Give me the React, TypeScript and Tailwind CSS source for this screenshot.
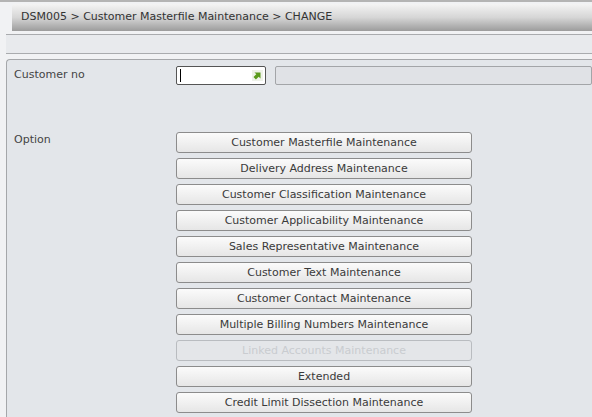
import React from 'react';

const options = [
  { label: 'Customer Masterfile Maintenance' },
  { label: 'Delivery Address Maintenance' },
  { label: 'Customer Classification Maintenance' },
  { label: 'Customer Applicability Maintenance' },
  { label: 'Sales Representative Maintenance' },
  { label: 'Customer Text Maintenance' },
  { label: 'Customer Contact Maintenance' },
  { label: 'Multiple Billing Numbers Maintenance' },
  { label: 'Linked Accounts Maintenance', disabled: true },
  { label: 'Extended' },
  { label: 'Credit Limit Dissection Maintenance' },
];

const App: React.FC = () => {
  return (
    <div
      className="h-[417px] w-[592px] overflow-hidden bg-[#f1f2f4] text-[11px] text-[#444]"
      style={{ fontFamily: '"DejaVu Sans", Verdana, sans-serif' }}
    >
      <div className="h-[2px] bg-[#b4b4b4]" />
      {/* breadcrumb bar */}
      <div className="mt-[2px] ml-[12px] flex h-[27px] items-center rounded-tl-[3px] bg-gradient-to-b from-[#f4f4f4] via-[#d6d6d6] to-[#9c9c9c] pl-[9px] text-[11px] text-[#333]">
        DSM005 &gt; Customer Masterfile Maintenance &gt; CHANGE
      </div>
      {/* message bar */}
      <div className="mt-[3px] ml-[6px] h-[20px] border-y border-[#a9abae] bg-[#e8eaed]" />
      {/* main panel */}
      <div className="mt-[5px] ml-[6px] h-[400px] rounded-tl-[4px] border-t border-l border-[#a5a7aa] bg-[#e3e6ea] pt-[6px]">
        <div className="flex">
          <div className="w-[169px] pl-[7px] pt-[1px]">Customer no</div>
          <div className="relative h-[19px] w-[90px] rounded-[2px] border border-[#555] bg-white">
            <div className="absolute top-[2px] left-[3px] h-[13px] w-px bg-black" />
            <svg className="absolute top-[3px] right-[2px]" width="11" height="11" viewBox="0 0 11 11">
              <rect width="11" height="11" fill="#eef2e8" />
              <path d="M2.5 2.5h6v6L6.7 6.7 3.9 9.5 1.5 7.1l2.8-2.8z" fill="#5a9a1a" />
            </svg>
          </div>
          <div className="ml-[9px] h-[19px] flex-1 rounded-[2px] border border-[#a3a5a8] bg-[#e0e2e6]" />
        </div>
        <div className="mt-[47px] flex">
          <div className="w-[169px] pl-[7px]">Option</div>
          <div className="flex w-[296px] flex-col gap-[5px]">
            {options.map((o) =>
              o.disabled ? (
                <div
                  key={o.label}
                  className="flex h-[21px] items-center justify-center rounded-[3px] border border-[#b9bcc0] bg-[#e4e6e9] pt-px text-[#c9ccd0]"
                >
                  {o.label}
                </div>
              ) : (
                <div
                  key={o.label}
                  className="flex h-[21px] items-center justify-center rounded-[3px] border border-[#8c8c8c] bg-gradient-to-b from-[#fbfbfb] to-[#e6e6e6] pt-px text-[#3a3a3a]"
                >
                  {o.label}
                </div>
              )
            )}
          </div>
        </div>
      </div>
    </div>
  );
};

export default App;
